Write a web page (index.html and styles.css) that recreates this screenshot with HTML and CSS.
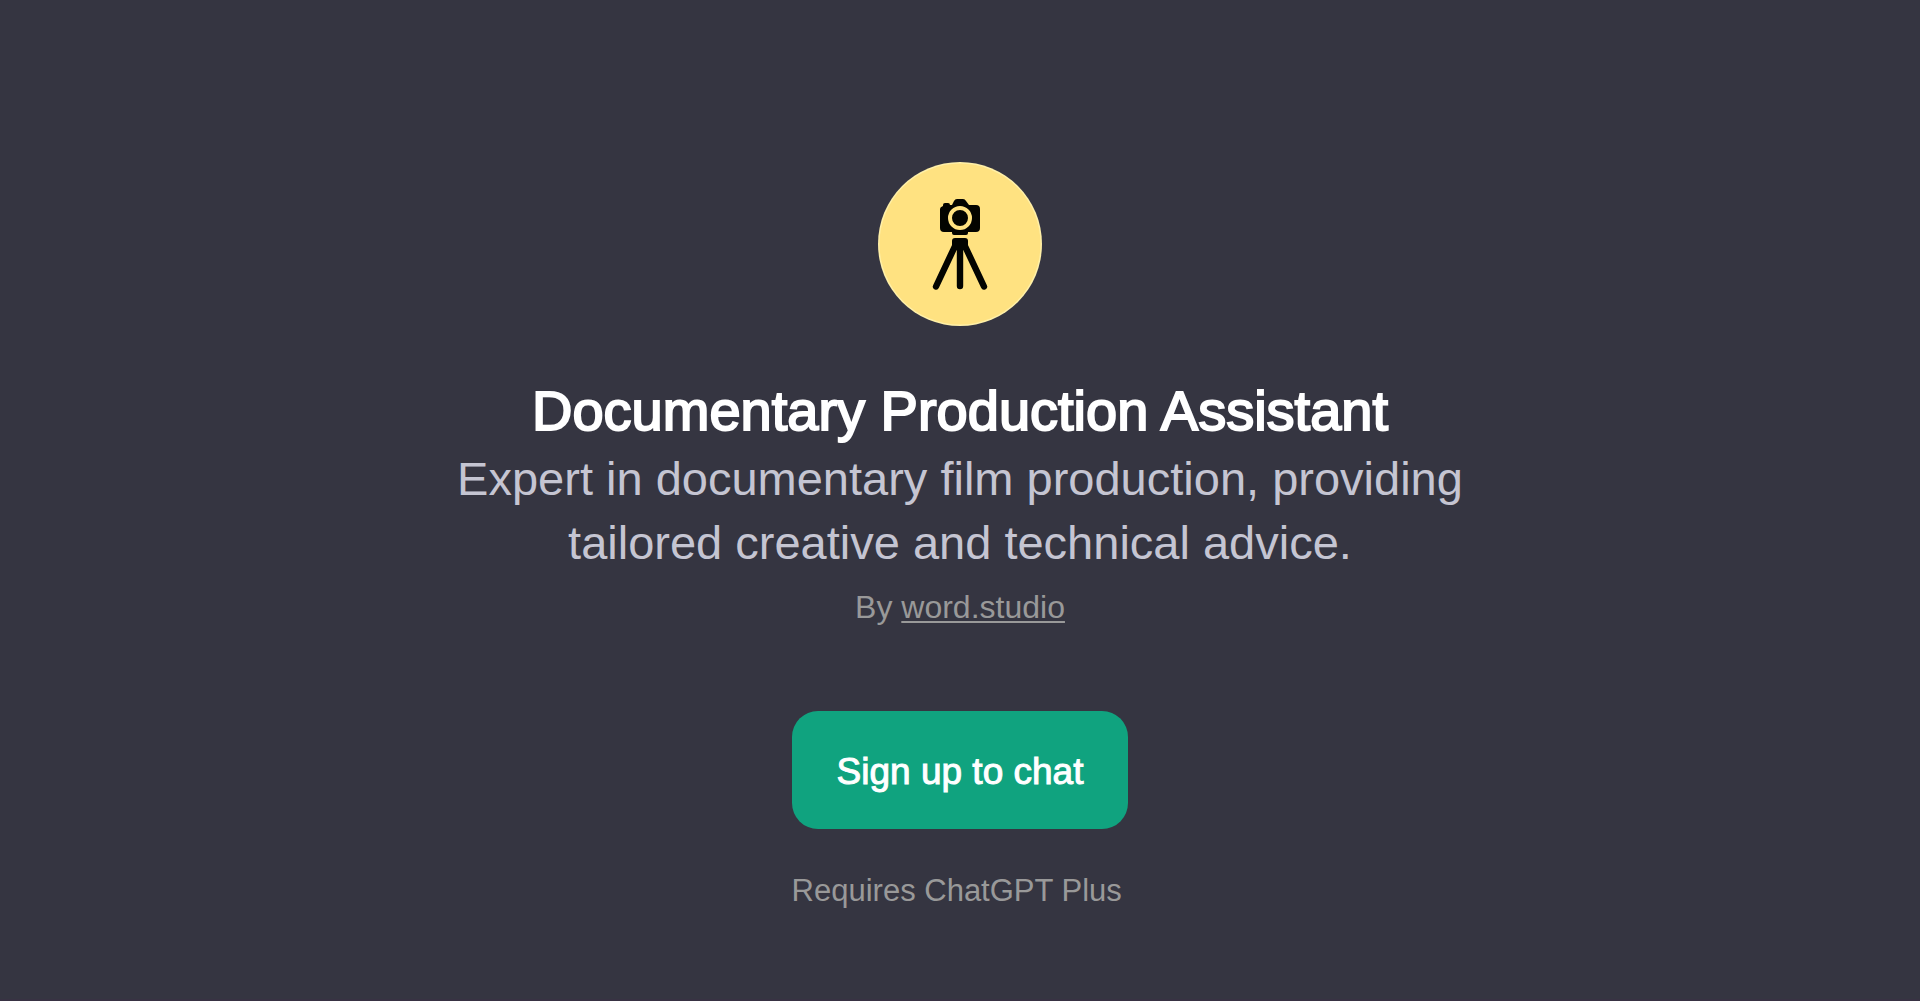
FILE: index.html
```html
<!DOCTYPE html>
<html lang="en">
<head>
<meta charset="utf-8">
<meta name="viewport" content="width=device-width, initial-scale=1">
<title>Documentary Production Assistant</title>
<link rel="stylesheet" href="styles.css">
</head>
<body>
<main class="page">
  <svg class="avatar" viewBox="0 0 164 164" role="img" aria-label="Camera on a tripod">
    <circle cx="82" cy="82" r="82" fill="#fff0a8"/>
    <circle cx="82" cy="82" r="80.5" fill="#ffe281"/>
    <g transform="translate(0 4)">
      <path d="M65 40V39Q65 37 67 37H70Q72 37 72 39H74L76 35Q77 33 79 33H85Q87 33 88 35L91 39H98Q102 39 102 43V62Q102 66 98 66H90V67Q90 69 88 69H76Q74 69 74 67V66H66Q62 66 62 62V43Q62 41 65 40Z" fill="#030400"/>
      <circle cx="82" cy="52" r="10" fill="#030400" stroke="#ffe281" stroke-width="4"/>
      <path d="M74 80V75Q74 72 77 72H87Q90 72 90 75V80Z" fill="#030400"/>
      <path d="M78 78L58 120.500M82 78V120M86 78L106 120.500" fill="none" stroke="#030400" stroke-width="6.400" stroke-linecap="round"/>
    </g>
  </svg>
  <h1 class="title">Documentary Production Assistant</h1>
  <p class="description">Expert in documentary film production, providing tailored creative and technical advice.</p>
  <p class="author">By <a class="author-link" href="#">word.studio</a></p>
  <div class="actions">
    <button class="signup" type="button">Sign up to chat</button>
    <p class="note">Requires ChatGPT Plus</p>
  </div>
</main>
</body>
</html>
```
FILE: styles.css
```css
* {
  box-sizing: border-box;
}

body {
  margin: 0;
  background: #353541;
  font-family: "Liberation Sans", Arial, sans-serif;
}

.page {
  display: flex;
  flex-direction: column;
  align-items: center;
  min-height: 100vh;
  padding: 162px 24px 64px;
  border-bottom: 2px solid #383243;
  text-align: center;
}

.avatar {
  width: 164px;
  height: 164px;
}

.title {
  margin: 53px 0 0;
  color: #fff;
  font-size: 56px;
  font-weight: 400;
  line-height: 64px;
  -webkit-text-stroke: 2px #fff;
}

.description {
  max-width: 1080px;
  margin: 4px 0 0;
  color: #c5c5d2;
  font-size: 47px;
  line-height: 64px;
}

.author {
  margin: 8px 0 0;
  color: #999;
  font-size: 32px;
  line-height: 48px;
}

.author-link {
  color: inherit;
  text-decoration: underline;
  text-decoration-thickness: 2px;
  text-underline-offset: 3px;
  text-decoration-skip-ink: none;
}

.actions {
  display: flex;
  flex-direction: column;
  margin-top: 80px;
  text-align: left;
}

.signup {
  padding: 37px 45px 33px;
  border: 0;
  border-radius: 26px;
  background: #10a37f;
  color: #fff;
  font: 400 37px/48px "Liberation Sans", Arial, sans-serif;
  -webkit-text-stroke: 1px #fff;
  cursor: pointer;
}

.note {
  margin: 38px 0 0;
  color: #999;
  font-size: 31px;
  line-height: 48px;
}
```
